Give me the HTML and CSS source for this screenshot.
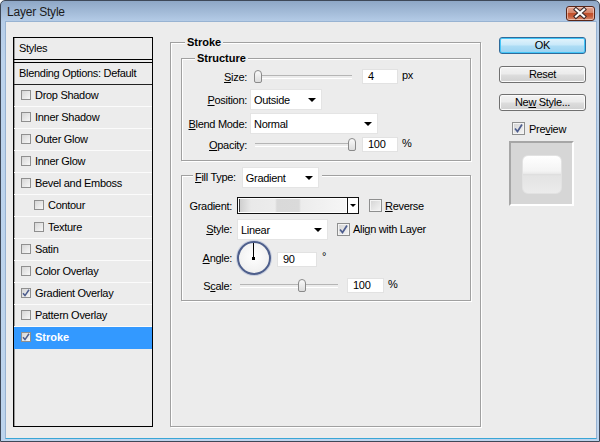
FILE: index.html
```html
<!DOCTYPE html>
<html>
<head>
<meta charset="utf-8">
<title>Layer Style</title>
<link rel="stylesheet" href="styles.css">
</head>
<body>
<div class="window">
  <div class="titlebar">
    <span class="title">Layer Style</span>
    <div class="close">
      <svg width="28" height="14" viewBox="0 0 28 14">
        <path d="M10 3.5 L18 10.5 M18 3.5 L10 10.5" stroke="#3b2a2a" stroke-width="4.2" stroke-linecap="square"/>
        <path d="M10 3.5 L18 10.5 M18 3.5 L10 10.5" stroke="#ffffff" stroke-width="2.2" stroke-linecap="square"/>
      </svg>
    </div>
  </div>
  <div class="client">
    <div class="styles-list">
      <div class="st-head">Styles</div>
      <div class="st-blend">Blending Options: Default</div>
      <div class="st-row"><span class="scb"></span>Drop Shadow</div>
      <div class="st-row"><span class="scb"></span>Inner Shadow</div>
      <div class="st-row"><span class="scb"></span>Outer Glow</div>
      <div class="st-row"><span class="scb"></span>Inner Glow</div>
      <div class="st-row"><span class="scb"></span>Bevel and Emboss</div>
      <div class="st-row sub"><span class="scb"></span>Contour</div>
      <div class="st-row sub"><span class="scb"></span>Texture</div>
      <div class="st-row"><span class="scb"></span>Satin</div>
      <div class="st-row"><span class="scb"></span>Color Overlay</div>
      <div class="st-row"><span class="scb on"><svg width="8" height="8" viewBox="0 0 8 8"><path d="M1 4.2 L3 6.6 L7 0.8" fill="none" stroke="#4d5d8e" stroke-width="1.5"/></svg></span>Gradient Overlay</div>
      <div class="st-row"><span class="scb"></span>Pattern Overlay</div>
      <div class="st-row sel"><span class="scb on"><svg width="8" height="8" viewBox="0 0 8 8"><path d="M1 4.2 L3 6.6 L7 0.8" fill="none" stroke="#4d5d8e" stroke-width="1.5"/></svg></span>Stroke</div>
    </div>

    <fieldset class="grp main">
      <legend class="lg-main">Stroke</legend>

      <fieldset class="grp structure">
        <legend class="lg-struct">Structure</legend>
        <div class="row r1">
          <span class="lbl s-lbl"><u>S</u>ize:</span>
          <div class="slider s-slider"><span class="thumb" style="left:-1px"></span></div>
          <span class="field f-num">4</span>
          <span class="unit">px</span>
        </div>
        <div class="row r2">
          <span class="lbl s-lbl"><u>P</u>osition:</span>
          <div class="combo c-pos"><span>Outside</span><i class="arrow"></i></div>
        </div>
        <div class="row r3">
          <span class="lbl s-lbl"><u>B</u>lend Mode:</span>
          <div class="combo c-blend"><span>Normal</span><i class="arrow"></i></div>
        </div>
        <div class="row r4">
          <span class="lbl s-lbl"><u>O</u>pacity:</span>
          <div class="slider s-slider"><span class="thumb" style="left:93px"></span></div>
          <span class="field f-num">100</span>
          <span class="unit">%</span>
        </div>
      </fieldset>

      <fieldset class="grp fill">
        <legend class="lg-fill"><span class="lg-inner"><span class="lg-label"><u>F</u>ill Type:</span><span class="combo c-fill"><span>Gradient</span><i class="arrow"></i></span></span></legend>
        <div class="row g1">
          <span class="lbl f-lbl">Gradient:</span>
          <div class="gradbox"><span class="grad"></span><span class="gdrop"><i class="arrow small"></i></span></div>
          <span class="cb rev-cb"></span><span class="cbl"><u>R</u>everse</span>
        </div>
        <div class="row g2">
          <span class="lbl f-lbl"><u>S</u>tyle:</span>
          <div class="combo c-style"><span>Linear</span><i class="arrow"></i></div>
          <span class="cb on align-cb"><svg width="11" height="11" viewBox="0 0 11 11"><path d="M2 5.5 L4.5 8.5 L9 1.5" fill="none" stroke="#4d5d8e" stroke-width="1.7"/></svg></span><span class="cbl">Ali<u>g</u>n with Layer</span>
        </div>
        <div class="row g3">
          <span class="lbl f-lbl"><u>A</u>ngle:</span>
          <div class="dial"><span class="hand"></span><span class="dot"></span></div>
          <span class="field f-angle">90</span>
          <span class="deg">°</span>
        </div>
        <div class="row g4">
          <span class="lbl f-lbl">S<u>c</u>ale:</span>
          <div class="slider sc-slider"><span class="thumb" style="left:58px"></span></div>
          <span class="field f-scale">100</span>
          <span class="unit">%</span>
        </div>
      </fieldset>
    </fieldset>

    <div class="buttons">
      <div class="btn def">OK</div>
      <div class="btn b2">Reset</div>
      <div class="btn b3">Ne<u>w</u> Style...</div>
      <div class="prev-row"><span class="cb on"><svg width="11" height="11" viewBox="0 0 11 11"><path d="M2 5.5 L4.5 8.5 L9 1.5" fill="none" stroke="#4d5d8e" stroke-width="1.7"/></svg></span><span class="cbl">Pre<u>v</u>iew</span></div>
      <div class="preview"><div class="swatch"></div></div>
    </div>
  </div>
</div>
</body>
</html>
```

FILE: styles.css
```css
* { box-sizing: border-box; }
html, body { margin: 0; padding: 0; }
body {
  width: 600px; height: 442px; overflow: hidden;
  font-family: "Liberation Sans", Arial, sans-serif;
  font-size: 11px; color: #000; letter-spacing: -0.3px;
  background: #fff;
}
u { text-decoration: underline; text-underline-offset: 1px; }

.window {
  width: 600px; height: 442px;
  display: flex; flex-direction: column;
  border: 1px solid #3e4858;
  border-radius: 5px 5px 0 0;
  background: linear-gradient(#8ea7c6 0px, #b6cde8 21px, #bcd3ec 60px, #bdd4ed 100%);
  padding: 0 2px 2px 4px;
}
.titlebar {
  height: 20px; flex: none;
  display: flex; align-items: center;
  padding-left: 2px;
}
.title {
  font-size: 12px; color: #1b1b1b; letter-spacing: -0.2px;
  flex: 1; padding-top: 1px;
}
.close {
  width: 29px; height: 15px; margin-right: 2px; margin-top: 4px;
  border: 1px solid #5a2618; border-radius: 3px;
  background: linear-gradient(#e3a593 0%, #d58468 45%, #c1502c 50%, #c45a38 70%, #d88e72 100%);
  box-shadow: inset 0 0 0 1px rgba(255,230,220,0.55);
  display: flex; align-items: center; justify-content: center;
}
.close svg { display: block; margin-left: -1px; }

.client {
  flex: 1;
  background: #ececec;
  border: 1px solid #98b3d2;
  border-bottom-color: #3aa6d6;
  display: flex; align-items: flex-start;
  padding: 15px 0 0 7px;
}

/* styles list */
.styles-list {
  width: 140px; height: 390px; flex: none;
  border: 1px solid #000;
  box-shadow: inset 1px 0 0 #9a9a9a;
  display: flex; flex-direction: column;
}
.st-head {
  height: 22px; line-height: 21px; padding-left: 5px;
  border-bottom: 1px solid #000;
}
.st-blend {
  margin-top: 2px;
  height: 23px; line-height: 21px; padding-left: 5px;
  border-top: 1px solid #000;
  border-bottom: 1px solid #222;
}
.st-row {
  height: 22px; line-height: 21px;
  border-bottom: 1px solid #fbfbfb;
  display: flex; align-items: center;
  padding-left: 7px;
}
.st-row.sub { padding-left: 20px; }
.st-row.sel {
  background: #3399ff; color: #fff; font-weight: bold; letter-spacing: 0;
  border-bottom-color: #3399ff;
}
.scb {
  width: 10px; height: 10px; flex: none;
  border: 1px solid #8f8f8f;
  background: linear-gradient(135deg, #d6d6d6, #f7f7f7);
  margin-right: 4px; margin-top: -1px;
  display: flex; align-items: center; justify-content: center;
}
.scb svg { display: block; }

/* group boxes */
.grp {
  margin: 0; padding: 0; min-width: 0;
  border: 1px solid #a0a0a0;
  box-shadow: 1px 1px 0 #fff, inset 1px 1px 0 #fff;
}
.grp legend {
  padding: 0 2px; background: #ececec;
  line-height: 13px; font-weight: bold; letter-spacing: 0;
}
.main {
  width: 311px; height: 391px; flex: none;
  margin-left: 17px; margin-top: -1px;
}
.lg-main { margin-left: 14px; }
.structure {
  width: 290px; margin: 3px 0 0 10px;
  padding-bottom: 8px;
}
.lg-struct { margin-left: 13px; }
.fill {
  width: 290px; margin: 6px 0 0 10px;
  padding-bottom: 7px;
}
.lg-fill { margin-left: 11px; font-weight: normal !important; letter-spacing: -0.3px !important; padding: 0 3px 0 2px !important; }
.lg-inner { display: flex; align-items: center; height: 17px; }
.lg-label { margin-right: 6px; margin-top: 3px; }
.c-fill { width: 77px; height: 21px; margin-bottom: -4px; margin-top: 0; }

.row { display: flex; align-items: center; }
.lbl { text-align: right; flex: none; }
.s-lbl { width: 65px; }
.f-lbl { width: 50px; }

.r1 { margin-top: 4px; height: 15px; }
.r2 { margin-top: 5px; height: 21px; }
.r3 { margin-top: 3px; height: 21px; }
.r4 { margin-top: 3px; height: 15px; }

.slider { position: relative; height: 13px; flex: none; }
.slider::before {
  content: ""; position: absolute; left: 0; right: 0; top: 5px;
  height: 2px; border-top: 1px solid #b5b5b5; border-bottom: 1px solid #fff;
}
.thumb {
  position: absolute; top: 0;
  width: 8px; height: 13px;
  border: 1px solid #8a8a8a; border-radius: 4px 4px 2px 2px;
  background: linear-gradient(#fafafa, #dcdcdc);
}
.s-slider { width: 97px; margin-left: 8px; }
.sc-slider { width: 98px; margin-left: 8px; }

.field {
  height: 15px; flex: none;
  background: #fff; border: 1px solid #e2e2e2;
  line-height: 13px; padding-left: 5px;
}
.f-num { width: 36px; margin-left: 10px; }
.unit { margin-left: 4px; margin-top: -4px; }

.combo {
  height: 21px; flex: none; position: relative;
  background: #fff; border: 1px solid #e4e4e4;
  display: flex; align-items: center; padding-left: 3px;
}
.combo > span { margin-top: 1px; }
.arrow {
  position: absolute; right: 5px; top: 8px;
  width: 0; height: 0;
  border-left: 4px solid transparent; border-right: 4px solid transparent;
  border-top: 4px solid #000;
}
.c-pos { width: 72px; margin-left: 3px; }
.c-blend { width: 128px; margin-left: 3px; }

.g1 { margin-top: 13px; height: 17px; }
.g2 { margin-top: 5px; height: 20px; }
.g3 { margin-top: 2px; height: 34px; }
.g4 { margin-top: 3px; height: 15px; }

.gradbox {
  width: 122px; height: 17px; margin-left: 5px; flex: none;
  border: 1px solid #111; display: flex; background: #fff;
}
.grad {
  flex: 1; border: 1px solid #fff;
  background: linear-gradient(90deg, #3a3a3a 0, #3a3a3a 1px, #cfcfcf 1px, #e9e9e9 12px, #ececec 36px, #d9d9d9 38px, #dadada 60px, #ececec 62px, #f6f6f6 100%);
}
.gdrop {
  width: 11px; border-left: 1px solid #111; position: relative; background: #fff;
}
.arrow.small { right: 2px; top: 6px; border-left-width: 3px; border-right-width: 3px; border-top-width: 3px; }

.cb {
  width: 13px; height: 13px; flex: none;
  border: 1px solid #8e8f8f;
  background: linear-gradient(135deg, #d3d3d3, #f5f5f5);
  box-shadow: inset 0 0 0 1px #f4f4f4;
  display: flex; align-items: center; justify-content: center;
}
.cb svg { display: block; }
.rev-cb { margin-left: 10px; }
.cbl { margin-left: 3px; }
.c-style { width: 91px; margin-left: 5px; }
.align-cb { margin-left: 9px; }

.dial {
  width: 34px; height: 34px; margin-left: 5px; flex: none;
  border-radius: 50%; position: relative;
  border: 2px solid #4e5f8c;
  background: radial-gradient(circle at 50% 45%, #ffffff 0%, #f3f3f3 60%, #e2e2e2 100%);
  box-shadow: 0 0 0 1px #c9cfdf;
}
.hand {
  position: absolute; left: 14px; top: 0; width: 1px; height: 15px; background: #000;
}
.dot {
  position: absolute; left: 13px; top: 14px; width: 3px; height: 3px; background: #000;
}
.f-angle { width: 40px; margin-left: 6px; margin-top: 2px; }
.deg { margin-left: 5px; margin-top: -5px; }

.f-scale { width: 37px; margin-left: 9px; }

/* buttons */
.buttons {
  width: 87px; flex: none; margin-left: 18px;
  display: flex; flex-direction: column;
}
.btn {
  height: 17px; line-height: 15px; text-align: center;
  border: 1px solid #707070; border-radius: 3px;
  background: linear-gradient(#f3f3f3 0%, #ebebeb 48%, #dddddd 52%, #d0d0d0 100%);
  box-shadow: inset 0 0 0 1px #fbfbfb;
}
.btn.def {
  border-color: #2f6a9a;
  background: linear-gradient(#e4f4fc 0%, #c7e8f9 48%, #aeddf5 52%, #99d2f1 100%);
  box-shadow: inset 0 0 0 1px #44c6f8;
}
.b2 { margin-top: 12px; }
.b3 { margin-top: 11px; }
.prev-row { display: flex; align-items: center; margin-top: 11px; padding-left: 13px; height: 13px; }
.prev-row .cbl { margin-left: 4px; }
.preview {
  width: 65px; height: 65px; margin-top: 6px; margin-left: 10px;
  background: #d6d6d6;
  border: 2px solid #a6a6a6; border-right-color: #fff; border-bottom-color: #fff;
  padding: 12px 0 0 11px;
}
.swatch {
  width: 40px; height: 39px; border-radius: 6px;
  border: 1px solid #e2e2e2;
  background: linear-gradient(#ffffff 0%, #f4f4f4 40%, #ececec 47%, #dedede 49%, #e4e4e4 55%, #e8e8e8 80%, #ececec 100%);
}
```
